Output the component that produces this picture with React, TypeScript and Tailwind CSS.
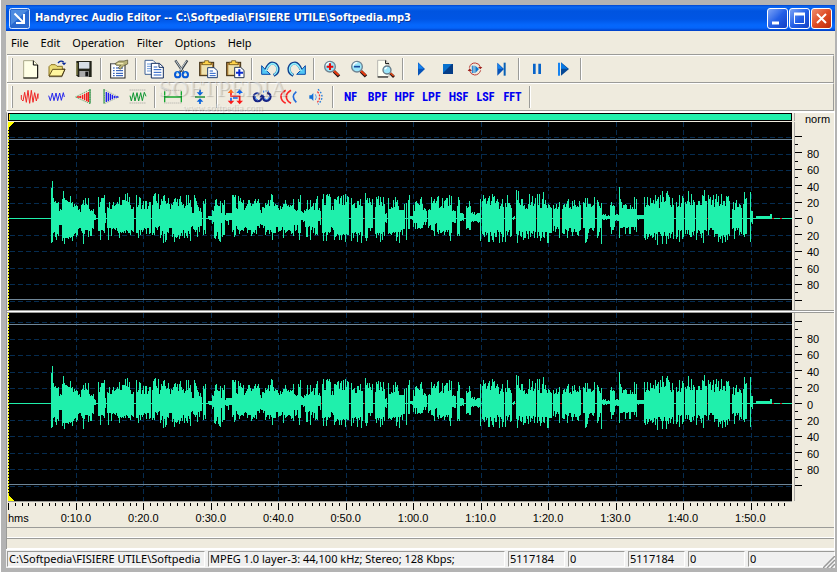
import type { ReactNode } from "react";
import { clsx } from "clsx";

const FILE_PATH = "C:\\Softpedia\\FISIERE UTILE\\Softpedia";

const MENUS = ["File", "Edit", "Operation", "Filter", "Options", "Help"];

const FILTERS = ["NF", "BPF", "HPF", "LPF", "HSF", "LSF", "FFT"];

const TIMES = [
  "0:10.0", "0:20.0", "0:30.0", "0:40.0", "0:50.0", "1:00.0",
  "1:10.0", "1:20.0", "1:30.0", "1:40.0", "1:50.0",
];

// start, end, low up, high up, low down, high down
const SEGMENTS = [
  [43, 44, 30, 30, 25, 25], [44, 45, 37, 37, 24, 24], [45, 51, 17, 22, 14, 25], [51, 54, 8, 10, 6, 8],
  [54, 60, 19, 29, 20, 27], [60, 65, 18, 24, 18, 25], [65, 70, 13, 18, 15, 23], [70, 73, 6, 17, 10, 15],
  [73, 81, 15, 25, 12, 26], [81, 86, 8, 15, 8, 20], [86, 88, 2, 8, 2, 5], [90, 97, 12, 25, 12, 22],
  [97, 98, 5, 5, 5, 5], [99, 104, 10, 17, 10, 23], [104, 110, 12, 17, 10, 20], [110, 116, 15, 29, 14, 23],
  [116, 122, 17, 25, 12, 18], [122, 126, 10, 13, 12, 20], [128, 133, 10, 25, 12, 22], [133, 143, 10, 20, 8, 18],
  [144, 147, 15, 27, 15, 23], [147, 152, 10, 27, 8, 15], [152, 160, 15, 24, 13, 26], [160, 164, 10, 22, 10, 17],
  [164, 173, 14, 24, 15, 25], [173, 178, 11, 19, 12, 20], [178, 183, 13, 23, 12, 25], [183, 186, 6, 13, 7, 13],
  [186, 190, 15, 25, 12, 20], [190, 194, 7, 16, 8, 15], [195, 198, 15, 21, 10, 20], [200, 204, 2, 3, 1, 2],
  [204, 206, 5, 9, 4, 8], [206, 213, 13, 19, 14, 24], [213, 214, 5, 5, 5, 5], [214, 217, 15, 18, 15, 20],
  [217, 219, 3, 5, 2, 5], [219, 224, 5, 6, 2, 7], [224, 228, 24, 29, 12, 20], [228, 230, 9, 10, 8, 12],
  [230, 236, 15, 24, 12, 22], [236, 239, 8, 18, 7, 12], [239, 242, 12, 24, 10, 21], [242, 249, 14, 20, 12, 18],
  [249, 252, 16, 22, 8, 16], [252, 257, 6, 11, 6, 10], [257, 268, 14, 25, 12, 22], [268, 275, 8, 19, 8, 14],
  [275, 286, 13, 21, 12, 20], [286, 290, 7, 15, 7, 13], [290, 293, 12, 25, 14, 25], [293, 297, 5, 8, 2, 6],
  [297, 307, 8, 20, 8, 22], [307, 310, 15, 23, 15, 24], [310, 313, 5, 16, 3, 8], [314, 323, 15, 25, 14, 24],
  [323, 326, 7, 18, 9, 12], [326, 341, 13, 24, 16, 24], [343, 355, 10, 24, 14, 26], [357, 360, 20, 30, 20, 24],
  [360, 365, 15, 22, 10, 18], [367, 377, 12, 23, 14, 24], [377, 379, 3, 6, 4, 6], [380, 390, 11, 21, 14, 24],
  [390, 397, 8, 20, 10, 25], [398, 399, 15, 15, 22, 22], [400, 402, 18, 26, 10, 17], [402, 405, 2, 2, 1, 2],
  [405, 409, 8, 20, 5, 13], [409, 415, 14, 23, 10, 17], [415, 419, 4, 12, 4, 8], [420, 423, 8, 14, 7, 12],
  [423, 427, 18, 24, 12, 23], [427, 429, 6, 17, 5, 15], [429, 441, 12, 26, 12, 17], [441, 444, 15, 25, 15, 25],
  [444, 448, 5, 8, 4, 7], [449, 452, 14, 27, 15, 18], [452, 456, 4, 6, 2, 4], [458, 463, 11, 18, 9, 18],
  [463, 472, 4, 6, 3, 5], [472, 473, 19, 19, 23, 23], [474, 489, 15, 26, 14, 26], [489, 496, 9, 20, 12, 27],
  [497, 504, 10, 23, 12, 24], [505, 507, 1, 3, 1, 2], [508, 511, 18, 28, 16, 25], [511, 520, 10, 21, 13, 22],
  [520, 528, 10, 28, 13, 24], [529, 544, 12, 26, 14, 26], [545, 552, 9, 16, 8, 23], [554, 564, 10, 19, 10, 22],
  [564, 573, 13, 18, 11, 19], [575, 582, 12, 27, 10, 25], [582, 587, 12, 22, 10, 16], [589, 594, 10, 18, 10, 28],
  [594, 602, 2, 4, 1, 3], [602, 607, 13, 17, 9, 16], [607, 611, 3, 6, 2, 4], [611, 612, 31, 31, 20, 20],
  [612, 629, 10, 22, 9, 18], [629, 631, 2, 3, 1, 2], [631, 636, 3, 3, 1, 2], [636, 646, 13, 25, 16, 30],
  [646, 666, 12, 29, 14, 27], [668, 676, 12, 24, 12, 27], [677, 687, 14, 27, 12, 20], [688, 699, 11, 28, 12, 28],
  [700, 708, 12, 25, 10, 20], [708, 722, 14, 25, 16, 25], [724, 734, 9, 23, 10, 22], [735, 739, 16, 27, 16, 22],
  [742, 743, 26, 26, 24, 24], [743, 745, 3, 8, 2, 6], [748, 762, 2, 2, 1, 1], [762, 764, 4, 4, 1, 1],
];

const noise = (n: number) => {
  const v = Math.sin(n * 12.9898) * 43758.5453;
  return v - Math.floor(v);
};

const buildWave = () => {
  let d = "";
  SEGMENTS.forEach(([from, to, lowUp, highUp, lowDown, highDown]) => {
    const floor = to - from > 2 ? lowUp * 0.85 : lowUp;
    for (let x = from; x < to; x++) {
      const up = Math.round(floor + (highUp - floor) * noise(x) ** 1.5);
      const down = Math.round(lowDown + (highDown - lowDown) * noise(x + 900) ** 2);
      d += `M${x} ${-up}h1V${down}h-1z`;
    }
  });
  return d;
};

const WAVE = buildWave();
const GRID_Y = [-81, -64, -48, -31, -15, 17, 33, 50, 66, 83];
const GRID_X = TIMES.map((_, i) => Math.round((i + 1) * 67.5));
const SILENT_MARKS = [107, 199, 320, 364, 411, 515, 536, 560, 582, 638, 706, 732, 772, 780];

const Channel = ({ top, label }: { top: number; label: string }) => (
  <svg
    viewBox={`0 ${-top} 784 188`}
    preserveAspectRatio="none"
    shapeRendering="crispEdges"
    role="img"
    aria-label={label}
    className="block h-[188px] w-full min-w-0 flex-1 bg-black"
  >
    {GRID_Y.map((y) => (
      <path key={y} d={`M2 ${y + 0.5}H784`} stroke="#062c50" strokeDasharray="5 3" />
    ))}
    {GRID_X.map((x) => (
      <path key={x} d={`M${x + 0.5} ${-top}V188`} stroke="#062c50" strokeDasharray="5 3" />
    ))}
    <path d="M0 -78.5H784M0 81.5H784" stroke="#6f8698" />
    <path d="M0 .5H784" stroke="#1ff0ac" />
    {SILENT_MARKS.map((x) => (
      <path key={x} d={`M${x - 8} .5h2`} stroke="#c81818" />
    ))}
    <path d={WAVE} fill="#1ff0ac" />
    <path d={`M.5 ${-top}V188`} stroke="#ff0" strokeDasharray="2 1" />
    {top === 96 ? (
      <path d="M0 -96H6L0 -90z" fill="#ff0" />
    ) : (
      <path d="M0 92V98H6z" fill="#ff0" />
    )}
  </svg>
);

const LEVELS = ["80", "60", "40", "20", "0", "20", "40", "60", "80"];

const LevelScale = ({ top }: { top: number }) => (
  <div className="flex h-[188px] w-[39px] border-l border-[#aaa9a5]">
    <svg viewBox={`0 ${-top} 12 188`} shapeRendering="crispEdges" className="h-full w-3" aria-hidden="true">
      {Array.from({ length: 21 }, (_, i) => {
        const y = Math.round((i - 10) * 8.2) + 0.5;
        return <path key={i} d={`M0 ${y}h${i % 2 ? 3 : 7}`} stroke="#000" />;
      })}
    </svg>
    <div className="flex flex-col">
      <div className={top === 96 ? "h-6" : "h-[18px]"} />
      <div className="flex h-[147px] flex-col justify-between">
        {LEVELS.map((level, i) => (
          <span key={i} className="leading-4">{level}</span>
        ))}
      </div>
    </div>
  </div>
);

const Icon = ({ children }: { children: ReactNode }) => (
  <svg viewBox="0 0 60 60" fill="none" className="size-5" aria-hidden="true">
    {children}
  </svg>
);

const ToolButton = ({ label, children }: { label: string; children: ReactNode }) => (
  <button type="button" aria-label={label} title={label} className="flex h-6 w-[27px] shrink-0 items-center justify-center">
    {children}
  </button>
);

const Separator = () => (
  <div className="flex w-2 shrink-0 justify-center">
    <div className="h-[22px] w-0.5 border-l border-r border-l-[#9b9b98] border-r-white" />
  </div>
);

const Toolbar = ({ label, children }: { label: string; children: ReactNode }) => (
  <div
    role="toolbar"
    aria-label={label}
    className="flex h-[27px] items-center border-t border-l border-white border-r border-r-[#9b9b98] pl-[3px] shadow-[0_-1px_0_#9b9b98]"
  >
    <div className="mr-[3px] h-[22px] w-0.5 border-l border-r border-l-white border-r-[#9b9b98]" />
    {children}
  </div>
);

const Clipboard = () => (
  <>
    <rect x="5" y="10" width="42" height="40" fill="#b0823c" stroke="#3d2c10" strokeWidth="3" />
    <rect x="10" y="18" width="32" height="29" fill="#efe2ae" />
    <path d="M13 17V10h7V5h12v5h7v7z" fill="#ffd34a" stroke="#5b430f" strokeWidth="2" />
  </>
);

const Lens = ({ sign }: { sign?: ReactNode }) => (
  <>
    <path d="M36 37L51 52" stroke="#211" strokeWidth="10" />
    <path d="M35 35L50 49" stroke="#e83b10" strokeWidth="6" />
    <circle cx="24" cy="23" r="16" fill="#9be6fa" stroke="#6f8291" strokeWidth="4" />
    <path d="M13 20Q15 11 25 11" stroke="#fff" strokeWidth="4" />
    {sign}
  </>
);

const Undo = () => (
  <>
    <path d="M41 49Q56 42 54 27Q50 12 36 12Q26 13 18 31" stroke="#0c3c8c" strokeWidth="9" />
    <path d="M5 20V46H31L24 39L17 33z" fill="#52c6f5" stroke="#0c4ca8" strokeWidth="3" />
    <path d="M42 47Q54 40 52 27Q48 14 36 14Q26 16 17 36" stroke="#8eeefc" strokeWidth="5" />
  </>
);

const MainToolbar = () => (
  <Toolbar label="Main">
    <ToolButton label="New">
      <Icon>
        <path d="M11 5H41L53 17V57H11z" fill="#ffffe6" stroke="#aaa98a" strokeWidth="3" />
        <path d="M40 5V18H53V57H10" stroke="#000" strokeWidth="3" />
      </Icon>
    </ToolButton>
    <ToolButton label="Open">
      <Icon>
        <path d="M6 51V23L12 17H25L30 22H46V32" fill="#eadc77" stroke="#8c7523" strokeWidth="3" />
        <path d="M6 51L17 31H54L44 51z" fill="#fff6a0" stroke="#66511a" strokeWidth="3" />
        <path d="M46 30H54L45 53H6" stroke="#33280c" strokeWidth="2" />
        <path d="M33 12Q42 2 50 10" stroke="#052698" strokeWidth="4" />
        <path d="M44 11H58L51 19z" fill="#052698" />
      </Icon>
    </ToolButton>
    <ToolButton label="Save">
      <Icon>
        <path d="M7 6H53V54H12L7 49z" fill="#222319" />
        <rect x="15" y="9" width="31" height="20" fill="#c9d3dc" />
        <path d="M15 12H46M15 18H46M15 24H46" stroke="#f1f5fa" strokeWidth="2" />
        <rect x="16" y="36" width="28" height="18" fill="#aaa" />
        <rect x="34" y="38" width="8" height="14" fill="#111" />
        <path d="M9 12V48" stroke="#a3a055" strokeWidth="3" />
      </Icon>
    </ToolButton>
    <Separator />
    <ToolButton label="Properties">
      <Icon>
        <rect x="5" y="14" width="43" height="43" fill="#fff" stroke="#222" strokeWidth="3" />
        <path d="M5 14H47" stroke="#888" strokeWidth="3" />
        <path d="M12 27H17M12 35H17M12 43H17M12 50H17M21 27H42M21 35H42M21 43H42M21 50H42" stroke="#1549b0" strokeWidth="3" />
        <path d="M18 14L30 6H45L56 3V15L44 20L34 31L28 26L35 19H22z" fill="#b9b37a" stroke="#4d4928" strokeWidth="2" />
        <path d="M25 14H43" stroke="#fff6bd" strokeWidth="3" />
      </Icon>
    </ToolButton>
    <Separator />
    <ToolButton label="Copy">
      <Icon>
        <path d="M3 4H27L36 13V46H3z" fill="#fff" stroke="#426396" strokeWidth="3" />
        <path d="M9 15H23M9 22H23M9 29H23M9 36H23" stroke="#6b9bdd" strokeWidth="3" />
        <path d="M22 13H46L58 24V57H22z" fill="#fff" stroke="#152f62" strokeWidth="3" />
        <path d="M45 13V25H58" stroke="#152f62" strokeWidth="3" />
        <path d="M29 24H40M29 32H52M29 40H52M29 48H52" stroke="#1f5bc4" strokeWidth="3" />
      </Icon>
    </ToolButton>
    <ToolButton label="Cut">
      <Icon>
        <path d="M13 4L38 41M49 4L25 41" stroke="#394149" strokeWidth="7" />
        <path d="M14 5L37 39M47 5L25 38" stroke="#c3ced5" strokeWidth="3" />
        <circle cx="20" cy="47" r="8" stroke="#0758d6" strokeWidth="6" />
        <circle cx="43" cy="47" r="8" stroke="#0758d6" strokeWidth="6" />
        <path d="M16 42L22 39M40 39L46 42" stroke="#63d1ff" strokeWidth="3" />
      </Icon>
    </ToolButton>
    <ToolButton label="Paste">
      <Icon>
        <Clipboard />
        <path d="M29 26H48L58 35V56H29z" fill="#fff" stroke="#203e70" strokeWidth="3" />
        <path d="M35 36H45M35 43H53M35 50H53" stroke="#1f5bc4" strokeWidth="3" />
      </Icon>
    </ToolButton>
    <ToolButton label="Paste new">
      <Icon>
        <Clipboard />
        <path d="M29 25H47L57 34V56H29z" fill="#fff" stroke="#283955" strokeWidth="3" />
        <path d="M43 31V52M33 41H54" stroke="#082ad0" strokeWidth="6" />
      </Icon>
    </ToolButton>
    <Separator />
    <ToolButton label="Undo">
      <Icon><Undo /></Icon>
    </ToolButton>
    <ToolButton label="Redo">
      <Icon><g transform="matrix(-1 0 0 1 60 0)"><Undo /></g></Icon>
    </ToolButton>
    <Separator />
    <ToolButton label="Zoom in">
      <Icon><Lens sign={<path d="M24 13V33M14 23H34" stroke="#e30b0b" strokeWidth="6" />} /></Icon>
    </ToolButton>
    <ToolButton label="Zoom out">
      <Icon><Lens sign={<path d="M15 23H33" stroke="#174b9c" strokeWidth="5" />} /></Icon>
    </ToolButton>
    <ToolButton label="Zoom to fit">
      <Icon>
        <path d="M5 4H29L39 14V53H5z" fill="#fffff2" stroke="#999" strokeWidth="2" />
        <path d="M29 4V14H39M5 54H36" stroke="#000" strokeWidth="3" />
        <path d="M43 43L54 54" stroke="#211" strokeWidth="8" />
        <path d="M43 42L53 51" stroke="#e84918" strokeWidth="5" />
        <circle cx="33" cy="33" r="12" fill="#9be6fa" stroke="#687a86" strokeWidth="4" />
        <path d="M26 31L33 25" stroke="#fff" strokeWidth="4" />
      </Icon>
    </ToolButton>
    <Separator />
    <ToolButton label="Play">
      <Icon>
        <path d="M21 10L42 30L21 50z" fill="#0753b8" />
        <path d="M22 12L38 29H22z" fill="#1683f1" />
      </Icon>
    </ToolButton>
    <ToolButton label="Stop">
      <Icon>
        <path d="M15 15H45V45H15z" fill="#053d87" />
        <path d="M15 15H42L15 42z" fill="#0871ce" />
      </Icon>
    </ToolButton>
    <ToolButton label="Play looped">
      <Icon>
        <path d="M13 26Q17 11 31 12Q43 13 46 24M47 34Q42 48 29 48Q18 47 14 36" stroke="#b93b35" strokeWidth="3" />
        <path d="M39 24H52L46 31zM8 36H21L14 28z" fill="#9e211d" />
        <path d="M22 20V42M27 20V42" stroke="#0877d2" strokeWidth="3" />
        <path d="M31 20L42 30L31 42z" fill="#0877d2" />
      </Icon>
    </ToolButton>
    <ToolButton label="Go to end">
      <Icon>
        <path d="M16 11L36 30L16 50z" fill="#0753b8" />
        <path d="M17 13L32 29H17z" fill="#1683f1" />
        <path d="M38 11V50" stroke="#0961b5" strokeWidth="6" />
      </Icon>
    </ToolButton>
    <Separator />
    <ToolButton label="Pause">
      <Icon><path d="M22 14V45M38 14V45" stroke="#0864ca" strokeWidth="8" /></Icon>
    </ToolButton>
    <ToolButton label="Resume">
      <Icon>
        <path d="M15 11V50" stroke="#1683f1" strokeWidth="6" />
        <path d="M21 10L45 30L21 50z" fill="#064996" />
        <path d="M21 11L41 29H21z" fill="#0879e5" />
      </Icon>
    </ToolButton>
    <Separator />
  </Toolbar>
);

const EffectsToolbar = () => (
  <Toolbar label="Effects">
    <ToolButton label="Amplify">
      <Icon><path d="M4 24V37L9 42L14 16L19 46L24 10L29 49L34 10L39 46L44 17L49 42L54 20V35" stroke="#f02525" strokeWidth="3" /></Icon>
    </ToolButton>
    <ToolButton label="Attenuate">
      <Icon><path d="M5 26L10 41L16 18L21 41L27 18L32 41L38 18L43 40L49 17L52 30" stroke="#2727ed" strokeWidth="3" /></Icon>
    </ToolButton>
    <ToolButton label="Fade in">
      <Icon>
        <path d="M4 30L48 8V50z" stroke="#168c35" strokeWidth="2" strokeDasharray="4 3" />
        <path d="M9 30H18M20 26V34M26 23V37M32 20V40M38 17V43M43 15V45" stroke="#f01e1e" strokeWidth="4" />
        <path d="M48 6V50" stroke="#138131" strokeWidth="3" />
      </Icon>
    </ToolButton>
    <ToolButton label="Fade out">
      <Icon>
        <path d="M10 8L54 30L11 50z" stroke="#7c9f7c" strokeWidth="2" strokeDasharray="4 3" />
        <path d="M16 15V45M22 17V43M28 20V40M34 23V37M40 26V34M43 30H52" stroke="#2020ee" strokeWidth="4" />
        <path d="M9 6V50" stroke="#168c35" strokeWidth="3" />
      </Icon>
    </ToolButton>
    <ToolButton label="Normalize">
      <Icon>
        <path d="M5 9H54M5 48H54" stroke="#777" strokeWidth="2" strokeDasharray="3 3" />
        <path d="M6 26L10 42L16 17L21 42L27 17L32 42L38 17L43 41L49 16L54 28" stroke="#0e9632" strokeWidth="3" />
      </Icon>
    </ToolButton>
    <Separator />
    <ToolButton label="Insert silence">
      <Icon>
        <path d="M4 10H57M4 48H57" stroke="#888" strokeWidth="2" strokeDasharray="3 3" />
        <path d="M5 13V46M55 13V46M5 30H55" stroke="#14a62d" strokeWidth="4" />
      </Icon>
    </ToolButton>
    <ToolButton label="Remove offset">
      <Icon>
        <path d="M15 30H45" stroke="#078427" strokeWidth="4" />
        <path d="M30 8V17M30 42V51" stroke="#0863dc" strokeWidth="5" />
        <path d="M20 16H40L30 26zM20 44H40L30 34z" fill="#0863dc" />
      </Icon>
    </ToolButton>
    <Separator />
    <ToolButton label="Swap channels">
      <Icon>
        <path d="M18 12V27H44V46" stroke="#fb1919" strokeWidth="5" />
        <path d="M44 12V22M18 32V46M24 33H38" stroke="#1264ed" strokeWidth="5" />
        <path d="M8 18L18 7L28 18z" fill="#fb6a19" />
        <path d="M34 18L44 7L54 18z" fill="#1264ed" />
        <path d="M8 41L18 52L28 41zM34 41L44 52L54 41z" fill="#fb1919" />
      </Icon>
    </ToolButton>
    <ToolButton label="Reverse">
      <Icon>
        <path d="M22 20Q8 16 5 27Q5 42 17 43Q28 42 29 31" stroke="#172383" strokeWidth="6" />
        <path d="M33 30Q32 40 43 42Q55 40 56 28Q54 18 45 18" stroke="#172383" strokeWidth="6" />
        <path d="M9 27Q10 39 18 39M37 32Q38 38 44 38Q51 37 52 29" stroke="#2f76ed" strokeWidth="3" />
        <path d="M22 31H36L29 22zM27 31H39L33 22z" fill="#172383" />
        <path d="M35 11V17M42 9V15M49 11V15" stroke="#2f76ed" strokeWidth="3" />
      </Icon>
    </ToolButton>
    <ToolButton label="Echo">
      <Icon>
        <path d="M20 10Q5 19 6 30Q7 42 20 49" stroke="#fa2525" strokeWidth="5" />
        <path d="M36 10Q21 19 22 30Q23 42 36 49" stroke="#fa2525" strokeWidth="5" />
        <path d="M52 14Q34 29 52 46" stroke="#246bdb" strokeWidth="5" />
      </Icon>
    </ToolButton>
    <ToolButton label="Reverb">
      <Icon>
        <path d="M10 25H16L22 18V42L16 35H10z" fill="#116ed7" />
        <path d="M28 22Q34 30 28 39" stroke="#60a3ee" strokeWidth="3" />
        <path d="M34 14Q48 29 34 46" stroke="#f33636" strokeWidth="4" strokeDasharray="6 4" />
        <path d="M36 7Q60 29 36 52" stroke="#257ddb" strokeWidth="4" strokeDasharray="5 5" />
      </Icon>
    </ToolButton>
    <Separator />
    {FILTERS.map((name) => (
      <button
        key={name}
        type="button"
        className="h-6 w-[27px] shrink-0 font-['Liberation_Sans_Narrow','Roboto_Condensed','Liberation_Mono',monospace] text-xs font-bold text-[#0000f0]"
      >
        {name}
      </button>
    ))}
    <Separator />
  </Toolbar>
);

const WindowButton = ({ label, close, children }: { label: string; close?: boolean; children: ReactNode }) => (
  <button
    type="button"
    aria-label={label}
    className={clsx(
      "size-[21px] rounded-[3px] border border-white",
      close
        ? "bg-linear-to-br from-[#ee8c6d] via-[#df4c24] to-[#bd2a0c]"
        : "bg-linear-to-br from-[#7da2f5] via-[#2460e7] to-[#123fc4]"
    )}
  >
    <svg viewBox="0 0 19 19" fill="none" stroke="#fff" className="size-full" aria-hidden="true">
      {children}
    </svg>
  </button>
);

const TitleBar = () => (
  <header className="flex h-[26px] items-center bg-[linear-gradient(to_bottom,#0045cf_0,#0a68f4_2px,#0054e0_6px,#0055e4_14px,#0567fc_20px,#0565fa_23px,#003dc4_26px)] pr-[3px] pl-[3px]">
    <svg viewBox="0 0 21 21" className="size-[21px]" aria-hidden="true">
      <rect x=".5" y=".5" width="20" height="20" rx="2" fill="#2868cf" stroke="#dce9ff" />
      <path d="M2 2H19L2 17z" fill="#4c8be0" />
      <path d="M5.500 5.500L14 14M15 6V15H7" fill="none" stroke="#fff" strokeWidth="2" />
    </svg>
    <h1 className="ml-[5px] flex-1 truncate font-['DejaVu_Sans_Condensed','DejaVu_Sans',sans-serif] text-[11px] font-bold text-white [text-shadow:1px_1px_#0b3593]">
      Handyrec Audio Editor -- {FILE_PATH}.mp3
    </h1>
    <div className="flex gap-px">
      <WindowButton label="Minimize">
        <path d="M4 14H11" strokeWidth="3" />
      </WindowButton>
      <WindowButton label="Maximize">
        <path d="M4.500 4V14.500H14.500V4" />
        <path d="M4 5H15" strokeWidth="3" />
      </WindowButton>
      <WindowButton label="Close" close>
        <path d="M5 5L14 14M14 5L5 14" strokeWidth="2" />
      </WindowButton>
    </div>
  </header>
);

const TimeRuler = () => (
  <div className="mr-[42px] border-t border-[#9b9b98]">
    <svg viewBox="0 0 784 9" preserveAspectRatio="none" shapeRendering="crispEdges" className="block h-[9px] w-full" aria-hidden="true">
      {Array.from({ length: 116 }, (_, i) => (
        <path
          key={i}
          d={`M${Math.round(i * 6.75) + 0.5} 1V${i % 10 ? 4 : 8}`}
          stroke="#000"
        />
      ))}
    </svg>
    <div className="flex h-4 text-center leading-[14px]">
      <span className="min-w-0 flex-[34] text-left">hms</span>
      {TIMES.map((time) => (
        <span key={time} className="min-w-0 flex-[67]">{time}</span>
      ))}
      <span className="min-w-0 flex-[8]" />
    </div>
  </div>
);

const StatusCell = ({ className, children }: { className: string; children: ReactNode }) => (
  <div className={clsx("h-4 overflow-hidden border-t border-l border-[#9b9b98] border-r border-b border-r-white border-b-white pl-px leading-[14px] whitespace-nowrap", className)}>
    {children}
  </div>
);

const StatusBar = () => (
  <footer className="relative flex gap-[3px] border-t border-white bg-[#f0f0f0] pt-px pb-px pl-px font-['Noto_Sans','DejaVu_Sans',sans-serif] text-[11px]">
    <StatusCell className="w-[198px]">{FILE_PATH}</StatusCell>
    <StatusCell className="min-w-0 flex-1">MPEG 1.0 layer-3: 44,100 kHz; Stereo; 128 Kbps;</StatusCell>
    <StatusCell className="w-[57px]">5117184</StatusCell>
    <StatusCell className="w-[57px]">0</StatusCell>
    <StatusCell className="w-[57px]">5117184</StatusCell>
    <StatusCell className="w-[57px]">0</StatusCell>
    <StatusCell className="w-[87px]">0</StatusCell>
    <svg viewBox="0 0 12 12" className="absolute right-0 bottom-0 size-3" aria-hidden="true">
      <path d="M0 12L12 0M4 12L12 4M8 12L12 8" stroke="#999" strokeWidth="1.500" />
    </svg>
  </footer>
);

export default function App() {
  return (
    <div className="min-h-screen border-l border-white bg-[#b3b3b3] pt-[5px] pr-0.5 pb-1 pl-[5px] font-['Liberation_Sans',Arial,sans-serif] text-[11px] text-black">
      <div className="flex flex-col bg-[#efebde]">
        <TitleBar />
        <nav className="flex h-6 items-center gap-3 pl-[5px] font-['Noto_Sans','DejaVu_Sans',sans-serif]">
          {MENUS.map((menu) => (
            <button key={menu} type="button">{menu}</button>
          ))}
        </nav>
        <div className="relative mr-px ml-px flex flex-col gap-px border-b border-[#9b9b98]">
          <MainToolbar />
          <EffectsToolbar />
          <div className="pointer-events-none absolute top-[21px] left-[151px] text-center font-['Liberation_Serif',serif] text-white/40 [text-shadow:1px_1px_1px_rgb(0_0_0/0.2)]">
            <div className="text-2xl leading-6">SOFTPEDIA</div>
            <div className="text-[10px] leading-4">www.softpedia.com</div>
          </div>
        </div>
        <main className="border-t-2 border-r border-l border-white border-l-[#9b9b98]">
          <div className="ml-px flex">
            <div className="h-2 flex-1 border border-black bg-[#1ff0ac]">
              <div className="h-full w-px bg-yellow-300" />
            </div>
            <div className="ml-0.5 h-2 w-[39px] border-l border-[#aaa9a5] pl-2.5 leading-[13px]">norm</div>
            <div className="w-px" />
          </div>
          <div className="ml-px flex pt-px">
            <Channel top={96} label="Left channel" />
            <div className="ml-0.5"><LevelScale top={96} /></div>
            <div className="w-px" />
          </div>
          <div className="h-[3px] border-t border-b border-[#9b9b98] bg-white" />
          <div className="ml-px flex">
            <Channel top={90} label="Right channel" />
            <div className="ml-0.5"><LevelScale top={90} /></div>
            <div className="w-px" />
          </div>
          <div className="ml-px"><TimeRuler /></div>
          <div className="h-[11px] border-t border-b border-t-[#9b9b98] border-b-white" />
          <div className="h-[11px] border-t border-b border-t-[#9b9b98] border-b-white" />
        </main>
        <StatusBar />
      </div>
    </div>
  );
}
